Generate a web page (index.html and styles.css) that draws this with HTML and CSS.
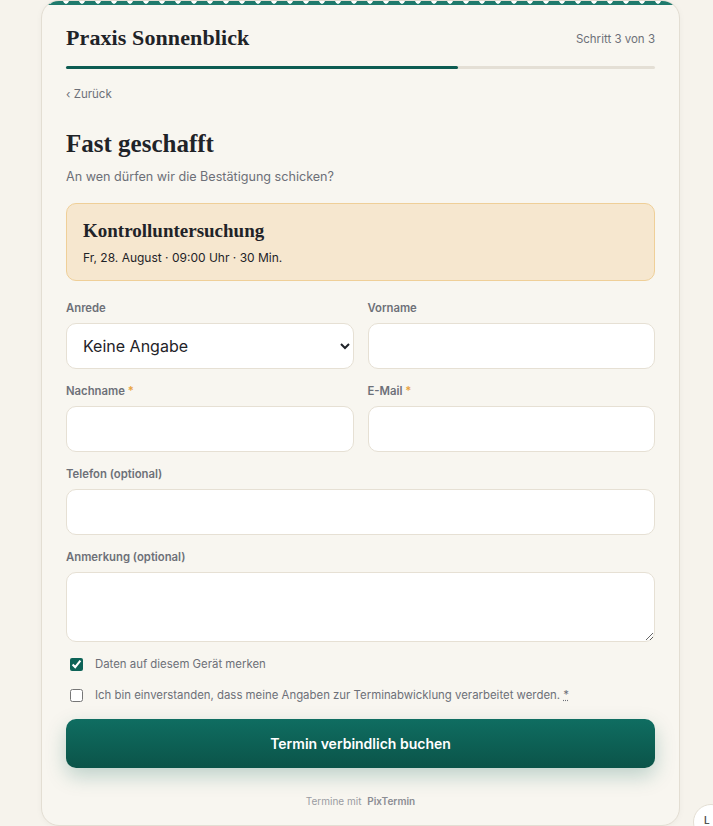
FILE: index.html
```html
<!DOCTYPE html>
<html lang="de">

<head>
    <meta charset="UTF-8">
    <meta name="viewport" content="width=device-width, initial-scale=1.0">
    <title>Praxis Sonnenblick – Termin buchen</title>
    <link rel="stylesheet" href="styles.css">
</head>

<body>
    <div class="page">
        <div class="card">
            <div class="header">
                <h1>Praxis Sonnenblick</h1>
                <span class="step">Schritt 3 von 3</span>
            </div>
            <div class="progress"><div class="progress-fill"></div></div>

            <a class="back" href="#">‹ Zurück</a>

            <h2>Fast geschafft</h2>
            <p class="subtitle">An wen dürfen wir die Bestätigung schicken?</p>

            <div class="summary">
                <div class="summary-title">Kontrolluntersuchung</div>
                <div class="summary-meta">Fr, 28. August · 09:00 Uhr · 30 Min.</div>
            </div>

            <form class="form">
                <div class="row">
                    <div class="field">
                        <label for="anrede">Anrede</label>
                        <select id="anrede">
                            <option>Keine Angabe</option>
                            <option>Frau</option>
                            <option>Herr</option>
                            <option>Divers</option>
                        </select>
                    </div>
                    <div class="field">
                        <label for="vorname">Vorname</label>
                        <input id="vorname" type="text">
                    </div>
                </div>
                <div class="row">
                    <div class="field">
                        <label for="nachname">Nachname <span class="req">*</span></label>
                        <input id="nachname" type="text">
                    </div>
                    <div class="field">
                        <label for="email">E-Mail <span class="req">*</span></label>
                        <input id="email" type="email">
                    </div>
                </div>
                <div class="field">
                    <label for="telefon">Telefon (optional)</label>
                    <input id="telefon" type="tel">
                </div>
                <div class="field">
                    <label for="anmerkung">Anmerkung (optional)</label>
                    <textarea id="anmerkung"></textarea>
                </div>

                <label class="check">
                    <input type="checkbox" checked>
                    <span>Daten auf diesem Gerät merken</span>
                </label>
                <label class="check">
                    <input type="checkbox">
                    <span>Ich bin einverstanden, dass meine Angaben zur Terminabwicklung verarbeitet werden. <abbr title="Pflichtfeld">*</abbr></span>
                </label>

                <button type="submit">Termin verbindlich buchen</button>
            </form>

            <div class="footer">Termine mit <strong>PixTermin</strong></div>
        </div>
    </div>
    <div class="fab">L</div>
</body>

</html>
```

FILE: styles.css
```css
body {
    font-family: Inter, "Noto Sans", sans-serif;
    background-color: #f6f3ec;
    margin: 0;
    color: #1f2328;
}

.page {
    padding: 0 0 2px 41px;
}

.card {
    position: relative;
    width: 589px;
    background: #f8f6f0;
    border: 1px solid #e3ded3;
    border-radius: 18px;
    padding: 22px 24px 18px;
    overflow: hidden;
    box-shadow: 0 1px 6px rgba(0, 0, 0, 0.04);
}

.card::before {
    content: "";
    position: absolute;
    top: 0;
    left: 0;
    right: 0;
    height: 4px;
    background: radial-gradient(circle at 8px 0, #ffffff 2.4px, transparent 3px) 0 0 / 16px 4px repeat-x, #1f7a6c;
}

.header {
    display: flex;
    justify-content: space-between;
    align-items: center;
}

h1 {
    font-family: "Liberation Serif", serif;
    font-size: 22px;
    font-weight: bold;
    margin: 2px 0 0;
    letter-spacing: 0.1px;
}

.step {
    font-size: 11.5px;
    color: #6d7078;
    margin-top: 4px;
}

.progress {
    height: 3px;
    background: #e4dfd5;
    border-radius: 2px;
    margin-top: 15px;
}

.progress-fill {
    width: 66.6%;
    height: 100%;
    background: #0d5c52;
    border-radius: 2px;
}

.back {
    display: inline-block;
    font-size: 11.5px;
    color: #6d7078;
    text-decoration: none;
    margin-top: 18px;
}

h2 {
    font-family: "Liberation Serif", serif;
    font-size: 25px;
    font-weight: bold;
    margin: 28px 0 0;
}

.subtitle {
    font-size: 12.6px;
    color: #6d7078;
    margin: 11px 0 0;
}

.summary {
    margin-top: 19px;
    background: #f6e7cf;
    border: 1px solid #efcf98;
    border-radius: 10px;
    padding: 16px 16px 15px;
}

.summary-title {
    font-family: "Liberation Serif", serif;
    font-size: 19px;
    font-weight: bold;
}

.summary-meta {
    font-size: 12px;
    margin-top: 8px;
}

.form {
    margin-top: 20px;
}

.row {
    display: grid;
    grid-template-columns: 1fr 1fr;
    gap: 14px;
}

.field {
    display: flex;
    flex-direction: column;
    margin-bottom: 15px;
}

label {
    font-size: 11.3px;
    font-weight: 600;
    color: #6d7078;
    margin-bottom: 8px;
}

.req {
    color: #e8a13b;
}

input[type="text"],
input[type="email"],
input[type="tel"],
select,
textarea {
    box-sizing: border-box;
    height: 46px;
    border: 1px solid #e6e0d4;
    border-radius: 10px;
    background-color: #ffffff;
    font-family: inherit;
    font-size: 16px;
    color: #1f2328;
    padding: 0 14px;
}

select {
    padding: 0 10px 0 12px;
}

textarea {
    height: 70px;
    padding: 10px 14px;
}

.check {
    display: flex;
    align-items: center;
    gap: 12px;
    font-weight: normal;
    font-size: 11.4px;
    color: #6d7078;
    margin: 0 0 17px 4px;
}

.check input {
    margin: 0;
    width: 13px;
    height: 13px;
    accent-color: #0d6357;
}

.check abbr {
    text-decoration: underline dotted;
    color: #6d7078;
}

button {
    display: block;
    width: 100%;
    height: 49px;
    margin-top: 16px;
    border: none;
    border-radius: 10px;
    background: linear-gradient(#0f6d61, #0b5449);
    color: #ffffff;
    font-family: inherit;
    font-size: 14px;
    font-weight: 600;
    cursor: pointer;
    box-shadow: 0 8px 20px rgba(13, 99, 87, 0.25);
}

.footer {
    text-align: center;
    font-size: 10px;
    color: #9a9ca2;
    margin-top: 27px;
}

.footer strong {
    font-weight: 600;
    color: #8b8d93;
    margin-left: 3px;
}

.fab {
    position: fixed;
    right: -16px;
    bottom: -14px;
    width: 36px;
    height: 36px;
    border-radius: 50%;
    background: #ffffff;
    border: 1px solid #e3ded3;
    font-size: 10px;
    font-weight: 600;
    color: #555;
    box-sizing: border-box;
    padding: 9px 0 0 10px;
}
```
